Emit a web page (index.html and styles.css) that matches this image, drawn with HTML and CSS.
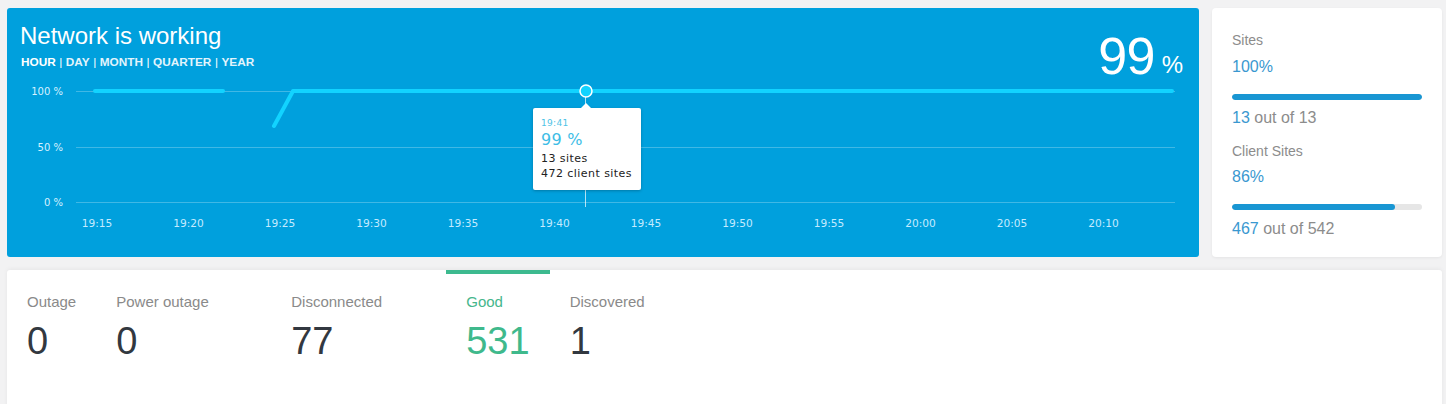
FILE: index.html
```html
<!DOCTYPE html>
<html lang="en">
<head>
<meta charset="utf-8">
<title>Network status</title>
<link rel="stylesheet" href="styles.css">
</head>
<body>
<div class="top-row">
  <section class="hero">
    <header class="hero-head">
      <div class="hero-title">
        <h1>Network is working</h1>
        <nav class="periods">
          <span class="period active">HOUR</span><span class="sep">|</span><span class="period">DAY</span><span class="sep">|</span><span class="period">MONTH</span><span class="sep">|</span><span class="period">QUARTER</span><span class="sep">|</span><span class="period">YEAR</span>
        </nav>
      </div>
      <div class="hero-value">99<span class="unit"> %</span></div>
    </header>
    <svg class="chart" width="1192" height="179" viewBox="0 70 1192 179">
      <g class="grid">
        <line x1="69" y1="83.5" x2="1168" y2="83.5"/>
        <line x1="69" y1="139.5" x2="1168" y2="139.5"/>
        <line x1="69" y1="194.5" x2="1168" y2="194.5"/>
      </g>
      <g class="ylab">
        <text x="56" y="87">100 %</text>
        <text x="56" y="143">50 %</text>
        <text x="56" y="198">0 %</text>
      </g>
      <g class="xlab">
        <text x="90" y="219">19:15</text>
        <text x="181.5" y="219">19:20</text>
        <text x="273" y="219">19:25</text>
        <text x="364.5" y="219">19:30</text>
        <text x="456" y="219">19:35</text>
        <text x="547.5" y="219">19:40</text>
        <text x="639" y="219">19:45</text>
        <text x="730.5" y="219">19:50</text>
        <text x="822" y="219">19:55</text>
        <text x="913.5" y="219">20:00</text>
        <text x="1005" y="219">20:05</text>
        <text x="1096.5" y="219">20:10</text>
      </g>
      <line class="cursor" x1="578.5" y1="89" x2="578.5" y2="199"/>
      <g class="series">
        <polyline points="88,83 216,83"/>
        <polyline points="267,118 286,83 1165,83"/>
      </g>
      <circle class="marker" cx="579" cy="83" r="6"/>
    </svg>
    <div class="tooltip">
      <div class="tt-time">19:41</div>
      <div class="tt-pct">99 %</div>
      <div class="tt-line">13 sites</div>
      <div class="tt-line">472 client sites</div>
    </div>
  </section>
  <aside class="side">
    <div class="metric">
      <div class="metric-label">Sites</div>
      <div class="metric-pct">100%</div>
      <div class="bar"><div class="bar-fill" style="width:100%"></div></div>
      <div class="metric-count"><span class="num">13</span> out of 13</div>
    </div>
    <div class="metric second">
      <div class="metric-label">Client Sites</div>
      <div class="metric-pct">86%</div>
      <div class="bar"><div class="bar-fill" style="width:86%"></div></div>
      <div class="metric-count"><span class="num">467</span> out of 542</div>
    </div>
  </aside>
</div>
<section class="states">
  <div class="state">
    <div class="state-label">Outage</div>
    <div class="state-value">0</div>
  </div>
  <div class="state wide">
    <div class="state-label">Power outage</div>
    <div class="state-value">0</div>
  </div>
  <div class="state wide">
    <div class="state-label">Disconnected</div>
    <div class="state-value">77</div>
  </div>
  <div class="state good active">
    <div class="state-label">Good</div>
    <div class="state-value">531</div>
  </div>
  <div class="state">
    <div class="state-label">Discovered</div>
    <div class="state-value">1</div>
  </div>
</section>
</body>
</html>
```

FILE: styles.css
```css
* { box-sizing: border-box; }

html, body {
  margin: 0;
  background: #f2f2f3;
  font-family: "Liberation Sans", Arial, sans-serif;
}

body {
  padding: 8px 4px 0 7px;
  overflow: hidden;
}

.top-row {
  display: flex;
  gap: 13px;
}

/* ---------- Blue hero card ---------- */
.hero {
  position: relative;
  flex: 1;
  height: 249px;
  background: #00a0dd;
  border-radius: 3px;
  color: #fff;
}

.hero-head {
  height: 70px;
  padding: 14px 16px 0 13px;
  display: flex;
  justify-content: space-between;
  align-items: flex-start;
}

.hero-title h1 {
  margin: 0;
  font-size: 24px;
  line-height: 28px;
  font-weight: normal;
}

.periods {
  margin-top: 5px;
  padding-left: 1px;
  font-size: 11.8px;
  line-height: 14px;
  font-weight: bold;
  color: #e3f4fc;
}

.periods .period.active { color: #fff; }

.periods .sep {
  margin: 0 3.5px;
  font-weight: normal;
  color: #fff;
}

.hero-value {
  margin-top: 8px;
  font-size: 52px;
  line-height: 52px;
  letter-spacing: -0.5px;
}

.hero-value .unit {
  font-size: 24px;
  letter-spacing: 0;
  position: relative;
  top: -1px;
}

.chart {
  display: block;
}

.chart .grid line {
  stroke: rgba(255, 255, 255, 0.25);
  stroke-width: 1;
}

.chart text {
  font-family: "DejaVu Sans", Verdana, sans-serif;
  font-size: 10.6px;
  fill: #c4ebff;
}

.chart .ylab text { text-anchor: end; font-size: 10px; fill: #d6f1ff; }
.chart .xlab text { text-anchor: middle; }

.chart .cursor {
  stroke: rgba(255, 255, 255, 0.7);
  stroke-width: 1;
}

.chart .series polyline {
  fill: none;
  stroke: #12d3ff;
  stroke-width: 4;
  stroke-linecap: round;
  stroke-linejoin: round;
}

.chart .marker {
  fill: #12d3ff;
  stroke: #fff;
  stroke-width: 1.5;
}

.tooltip {
  position: absolute;
  left: 526px;
  top: 100px;
  width: 108px;
  height: 82px;
  padding: 9px 0 0 8px;
  background: #fff;
  border-radius: 2px;
  box-shadow: 0 1px 3px rgba(0, 0, 0, 0.25);
  font-family: "DejaVu Sans", Verdana, sans-serif;
  color: #222;
}

.tooltip::before {
  content: "";
  position: absolute;
  left: 48px;
  top: -5px;
  border-left: 5px solid transparent;
  border-right: 5px solid transparent;
  border-bottom: 5px solid #fff;
}

.tt-time {
  font-size: 9px;
  line-height: 12px;
  color: #4fc3e6;
  letter-spacing: 0.3px;
}

.tt-pct {
  font-size: 16px;
  line-height: 22px;
  color: #3dbde6;
  letter-spacing: 0.3px;
}

.tt-line {
  font-size: 11px;
  line-height: 15px;
  letter-spacing: 0.45px;
}

/* ---------- Side card ---------- */
.side {
  width: 230px;
  height: 249px;
  background: #fff;
  border-radius: 4px;
  box-shadow: 0 1px 3px rgba(0, 0, 0, 0.06);
  padding: 22px 20px 0 20px;
}

.metric-label {
  font-size: 14px;
  line-height: 20px;
  color: #8c8c8c;
}

.metric.second .metric-label { margin-top: 13px; }

.metric-pct {
  margin-top: 7px;
  font-size: 16px;
  line-height: 20px;
  color: #3a98d0;
}

.metric.second .metric-pct { margin-top: 6px; }

.bar {
  margin-top: 17px;
  height: 6px;
  border-radius: 3px;
  background: #e6e6e6;
  overflow: hidden;
}

.bar-fill {
  height: 100%;
  border-radius: 3px;
  background: #1896d3;
}

.metric-count {
  margin-top: 8px;
  font-size: 16px;
  line-height: 20px;
  color: #8c8c8c;
}

.metric.second .metric-count { margin-top: 9px; }

.metric-count .num { color: #3a98d0; }

/* ---------- States card ---------- */
.states {
  margin-top: 13px;
  height: 150px;
  background: #fff;
  border-radius: 3px;
  box-shadow: 0 -1px 4px rgba(0, 0, 0, 0.05);
  display: flex;
  align-items: flex-start;
}

.state {
  position: relative;
  padding: 22px 20px 0 20px;
}

.state.wide { width: 175px; }

.state.active::before {
  content: "";
  position: absolute;
  left: 0;
  right: 0;
  top: 0;
  height: 4px;
  background: #3dba8f;
}

.state-label {
  font-size: 15px;
  line-height: 20px;
  color: #8a8a8a;
  white-space: nowrap;
}

.state-value {
  margin-top: 7px;
  font-size: 38px;
  line-height: 44px;
  color: #323840;
}

.state.good .state-label { color: #45b68c; }
.state.good .state-value { color: #3fb98c; }
```
